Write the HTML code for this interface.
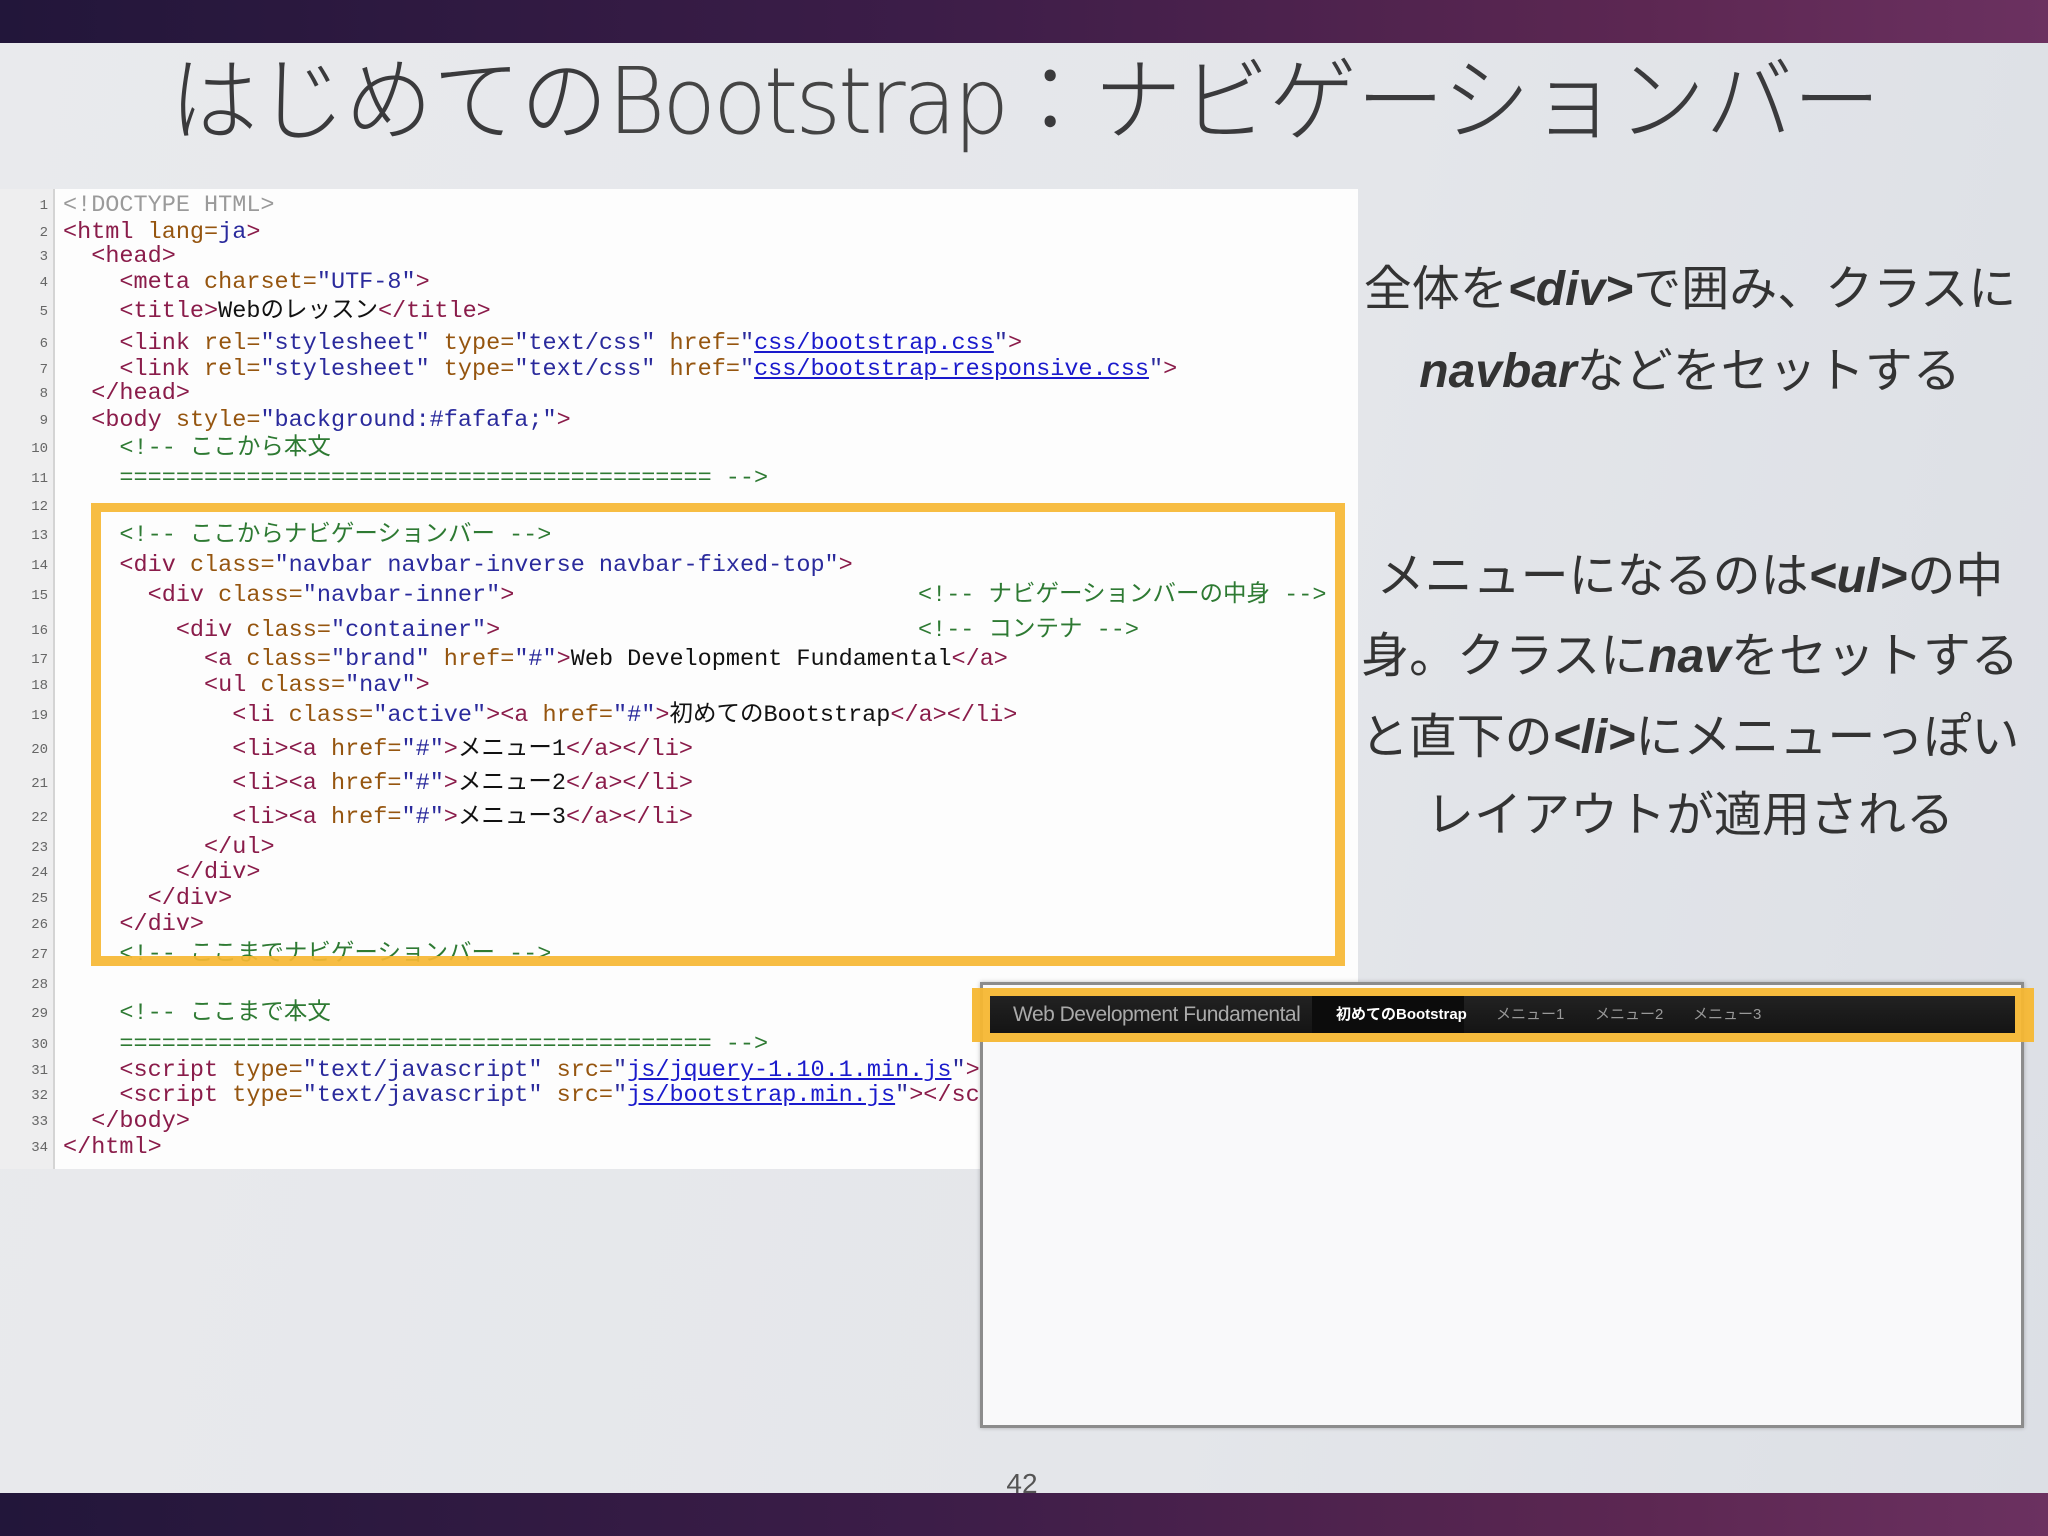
<!DOCTYPE html>
<html lang="ja"><head><meta charset="utf-8">
<style>
*{margin:0;padding:0;box-sizing:border-box}
body{width:2048px;height:1536px;overflow:hidden;position:relative;background:linear-gradient(100deg,#e9eaed 0%,#e4e6ea 60%,#dcdfe5 100%);font-family:"Liberation Sans","Noto Sans CJK JP",sans-serif}
.bar{position:absolute;left:0;width:2048px;background:linear-gradient(90deg,#22163a 0%,#3c1d48 45%,#5c2752 80%,#6b3160 100%)}
#title{position:absolute;left:170px;top:52px;font-size:92px;line-height:100px;color:#3a3a3c;white-space:nowrap;transform-origin:left top;transform:scaleX(0.952);font-weight:300;font-family:"Liberation Sans","Noto Sans CJK JP",sans-serif}
#title .bs{font-family:"DejaVu Sans","Liberation Sans",sans-serif;font-weight:200;letter-spacing:-3px;color:#444}
#code{position:absolute;left:0;top:189px;width:1358px;height:980px;background:#fdfdfd;overflow:hidden}
#gut{position:absolute;left:0;top:0;width:55px;height:980px;background:#eeeeef;border-right:2px solid #d4d4d4}
.ln{position:absolute;left:0;width:48px;text-align:right;font:14px "Liberation Mono",monospace;color:#666;line-height:28px;height:28px}
.l{position:absolute;left:63px;white-space:pre;font:23.5px "Liberation Mono","Noto Sans CJK JP",monospace;line-height:28px;height:28px;color:#111}
.t{color:#8a1c4a}.a{color:#95550f}.v{color:#2a2a9c}.c{color:#2e7a33}.d{color:#9a9a9a}
.u{color:#1a1acc;text-decoration:underline}
#hl{position:absolute;left:91px;top:503px;width:1254px;height:463px;border:10px solid #f6b733;border-top-width:9px;opacity:.92}
.rt{position:absolute;left:1340px;width:700px;text-align:center;font-size:48px;line-height:60px;color:#333;font-family:"Liberation Sans","Noto Sans CJK JP",sans-serif;white-space:nowrap}
.rt b{font-style:italic;font-weight:bold}
#pv{position:absolute;left:980px;top:982px;width:1044px;height:446px;border:3px solid #8c8c8c;background:#f9f9fa;box-shadow:0 0 4px rgba(0,0,0,.25)}
#nhl{position:absolute;left:972px;top:988px;width:1062px;height:54px;background:#f6b733;opacity:.95}
#nav{position:absolute;left:990px;top:996px;width:1025px;height:37px;background:linear-gradient(#222,#141414)}
#nav span{position:absolute;top:0;line-height:37px;white-space:nowrap}
</style></head><body>
<div class="bar" style="top:0;height:43px"></div>
<div class="bar" style="top:1493px;height:43px"></div>
<div id="title">はじめての<span class="bs">Bootstrap</span>：ナビゲーションバー</div>

<div id="code">
<div id="gut"></div>
</div>
<div id="codelines" style="position:absolute;left:0;top:4px">
<div class="ln" style="top:188px">1</div><div class="l d" style="top:188px">&lt;!DOCTYPE HTML&gt;</div>
<div class="ln" style="top:215px">2</div><div class="l" style="top:215px"><span class="t">&lt;html</span><span class="a"> lang=</span><span class="v">ja</span><span class="t">&gt;</span></div>
<div class="ln" style="top:239px">3</div><div class="l" style="top:239px">  <span class="t">&lt;head&gt;</span></div>
<div class="ln" style="top:265px">4</div><div class="l" style="top:265px">    <span class="t">&lt;meta</span><span class="a"> charset=</span><span class="v">"UTF-8"</span><span class="t">&gt;</span></div>
<div class="ln" style="top:294px">5</div><div class="l" style="top:294px">    <span class="t">&lt;title&gt;</span>Webのレッスン<span class="t">&lt;/title&gt;</span></div>
<div class="ln" style="top:326px">6</div><div class="l" style="top:326px">    <span class="t">&lt;link</span><span class="a"> rel=</span><span class="v">"stylesheet"</span><span class="a"> type=</span><span class="v">"text/css"</span><span class="a"> href=</span><span class="v">"</span><span class="u">css/bootstrap.css</span><span class="v">"</span><span class="t">&gt;</span></div>
<div class="ln" style="top:352px">7</div><div class="l" style="top:352px">    <span class="t">&lt;link</span><span class="a"> rel=</span><span class="v">"stylesheet"</span><span class="a"> type=</span><span class="v">"text/css"</span><span class="a"> href=</span><span class="v">"</span><span class="u">css/bootstrap-responsive.css</span><span class="v">"</span><span class="t">&gt;</span></div>
<div class="ln" style="top:376px">8</div><div class="l" style="top:376px">  <span class="t">&lt;/head&gt;</span></div>
<div class="ln" style="top:403px">9</div><div class="l" style="top:403px">  <span class="t">&lt;body</span><span class="a"> style=</span><span class="v">"background:#fafafa;"</span><span class="t">&gt;</span></div>
<div class="ln" style="top:431px">10</div><div class="l c" style="top:431px">    &lt;!-- ここから本文</div>
<div class="ln" style="top:461px">11</div><div class="l c" style="top:461px">    ========================================== --&gt;</div>
<div class="ln" style="top:489px">12</div>
<div class="ln" style="top:518px">13</div><div class="l c" style="top:518px">    &lt;!-- ここからナビゲーションバー --&gt;</div>
<div class="ln" style="top:548px">14</div><div class="l" style="top:548px">    <span class="t">&lt;div</span><span class="a"> class=</span><span class="v">"navbar navbar-inverse navbar-fixed-top"</span><span class="t">&gt;</span></div>
<div class="ln" style="top:578px">15</div><div class="l" style="top:578px">      <span class="t">&lt;div</span><span class="a"> class=</span><span class="v">"navbar-inner"</span><span class="t">&gt;</span></div><div class="l c" style="top:578px;left:918px">&lt;!-- ナビゲーションバーの中身 --&gt;</div>
<div class="ln" style="top:613px">16</div><div class="l" style="top:613px">        <span class="t">&lt;div</span><span class="a"> class=</span><span class="v">"container"</span><span class="t">&gt;</span></div><div class="l c" style="top:613px;left:918px">&lt;!-- コンテナ --&gt;</div>
<div class="ln" style="top:642px">17</div><div class="l" style="top:642px">          <span class="t">&lt;a</span><span class="a"> class=</span><span class="v">"brand"</span><span class="a"> href=</span><span class="v">"#"</span><span class="t">&gt;</span>Web Development Fundamental<span class="t">&lt;/a&gt;</span></div>
<div class="ln" style="top:668px">18</div><div class="l" style="top:668px">          <span class="t">&lt;ul</span><span class="a"> class=</span><span class="v">"nav"</span><span class="t">&gt;</span></div>
<div class="ln" style="top:698px">19</div><div class="l" style="top:698px">            <span class="t">&lt;li</span><span class="a"> class=</span><span class="v">"active"</span><span class="t">&gt;&lt;a</span><span class="a"> href=</span><span class="v">"#"</span><span class="t">&gt;</span>初めてのBootstrap<span class="t">&lt;/a&gt;&lt;/li&gt;</span></div>
<div class="ln" style="top:732px">20</div><div class="l" style="top:732px">            <span class="t">&lt;li&gt;&lt;a</span><span class="a"> href=</span><span class="v">"#"</span><span class="t">&gt;</span>メニュー1<span class="t">&lt;/a&gt;&lt;/li&gt;</span></div>
<div class="ln" style="top:766px">21</div><div class="l" style="top:766px">            <span class="t">&lt;li&gt;&lt;a</span><span class="a"> href=</span><span class="v">"#"</span><span class="t">&gt;</span>メニュー2<span class="t">&lt;/a&gt;&lt;/li&gt;</span></div>
<div class="ln" style="top:800px">22</div><div class="l" style="top:800px">            <span class="t">&lt;li&gt;&lt;a</span><span class="a"> href=</span><span class="v">"#"</span><span class="t">&gt;</span>メニュー3<span class="t">&lt;/a&gt;&lt;/li&gt;</span></div>
<div class="ln" style="top:830px">23</div><div class="l" style="top:830px">          <span class="t">&lt;/ul&gt;</span></div>
<div class="ln" style="top:855px">24</div><div class="l" style="top:855px">        <span class="t">&lt;/div&gt;</span></div>
<div class="ln" style="top:881px">25</div><div class="l" style="top:881px">      <span class="t">&lt;/div&gt;</span></div>
<div class="ln" style="top:907px">26</div><div class="l" style="top:907px">    <span class="t">&lt;/div&gt;</span></div>
<div class="ln" style="top:937px">27</div><div class="l c" style="top:937px">    &lt;!-- ここまでナビゲーションバー --&gt;</div>
<div class="ln" style="top:967px">28</div>
<div class="ln" style="top:996px">29</div><div class="l c" style="top:996px">    &lt;!-- ここまで本文</div>
<div class="ln" style="top:1027px">30</div><div class="l c" style="top:1027px">    ========================================== --&gt;</div>
<div class="ln" style="top:1053px">31</div><div class="l" style="top:1053px">    <span class="t">&lt;script</span><span class="a"> type=</span><span class="v">"text/javascript"</span><span class="a"> src=</span><span class="v">"</span><span class="u">js/jquery-1.10.1.min.js</span><span class="v">"</span><span class="t">&gt;&lt;/script&gt;</span></div>
<div class="ln" style="top:1078px">32</div><div class="l" style="top:1078px">    <span class="t">&lt;script</span><span class="a"> type=</span><span class="v">"text/javascript"</span><span class="a"> src=</span><span class="v">"</span><span class="u">js/bootstrap.min.js</span><span class="v">"</span><span class="t">&gt;&lt;/script&gt;</span></div>
<div class="ln" style="top:1104px">33</div><div class="l" style="top:1104px">  <span class="t">&lt;/body&gt;</span></div>
<div class="ln" style="top:1130px">34</div><div class="l" style="top:1130px"><span class="t">&lt;/html&gt;</span></div>
</div>
<div id="hl"></div>

<div class="rt" style="top:260px">全体を<b>&lt;div&gt;</b>で囲み、クラスに</div>
<div class="rt" style="top:342px"><b>navbar</b>などをセットする</div>
<div class="rt" style="top:547px">メニューになるのは<b>&lt;ul&gt;</b>の中</div>
<div class="rt" style="top:627px">身。クラスに<b>nav</b>をセットする</div>
<div class="rt" style="top:708px">と直下の<b>&lt;li&gt;</b>にメニューっぽい</div>
<div class="rt" style="top:786px">レイアウトが適用される</div>

<div id="pv"></div>
<div id="nhl"></div>
<div id="nav">
<span style="left:23px;font-size:21px;color:#aaa;letter-spacing:-0.5px">Web Development Fundamental</span>
<span style="left:322px;width:152px;height:37px;background:#0c0c0c"></span>
<span style="left:346px;font-size:15px;color:#fff;font-weight:bold;font-family:'Liberation Sans','Noto Sans CJK JP',sans-serif">初めてのBootstrap</span>
<span style="left:506px;font-size:15px;color:#999">メニュー1</span>
<span style="left:605px;font-size:15px;color:#999">メニュー2</span>
<span style="left:703px;font-size:15px;color:#999">メニュー3</span>
</div>
<div style="position:absolute;left:1000px;top:1468px;width:44px;text-align:center;font-size:28px;color:#555">42</div>
</body></html>
